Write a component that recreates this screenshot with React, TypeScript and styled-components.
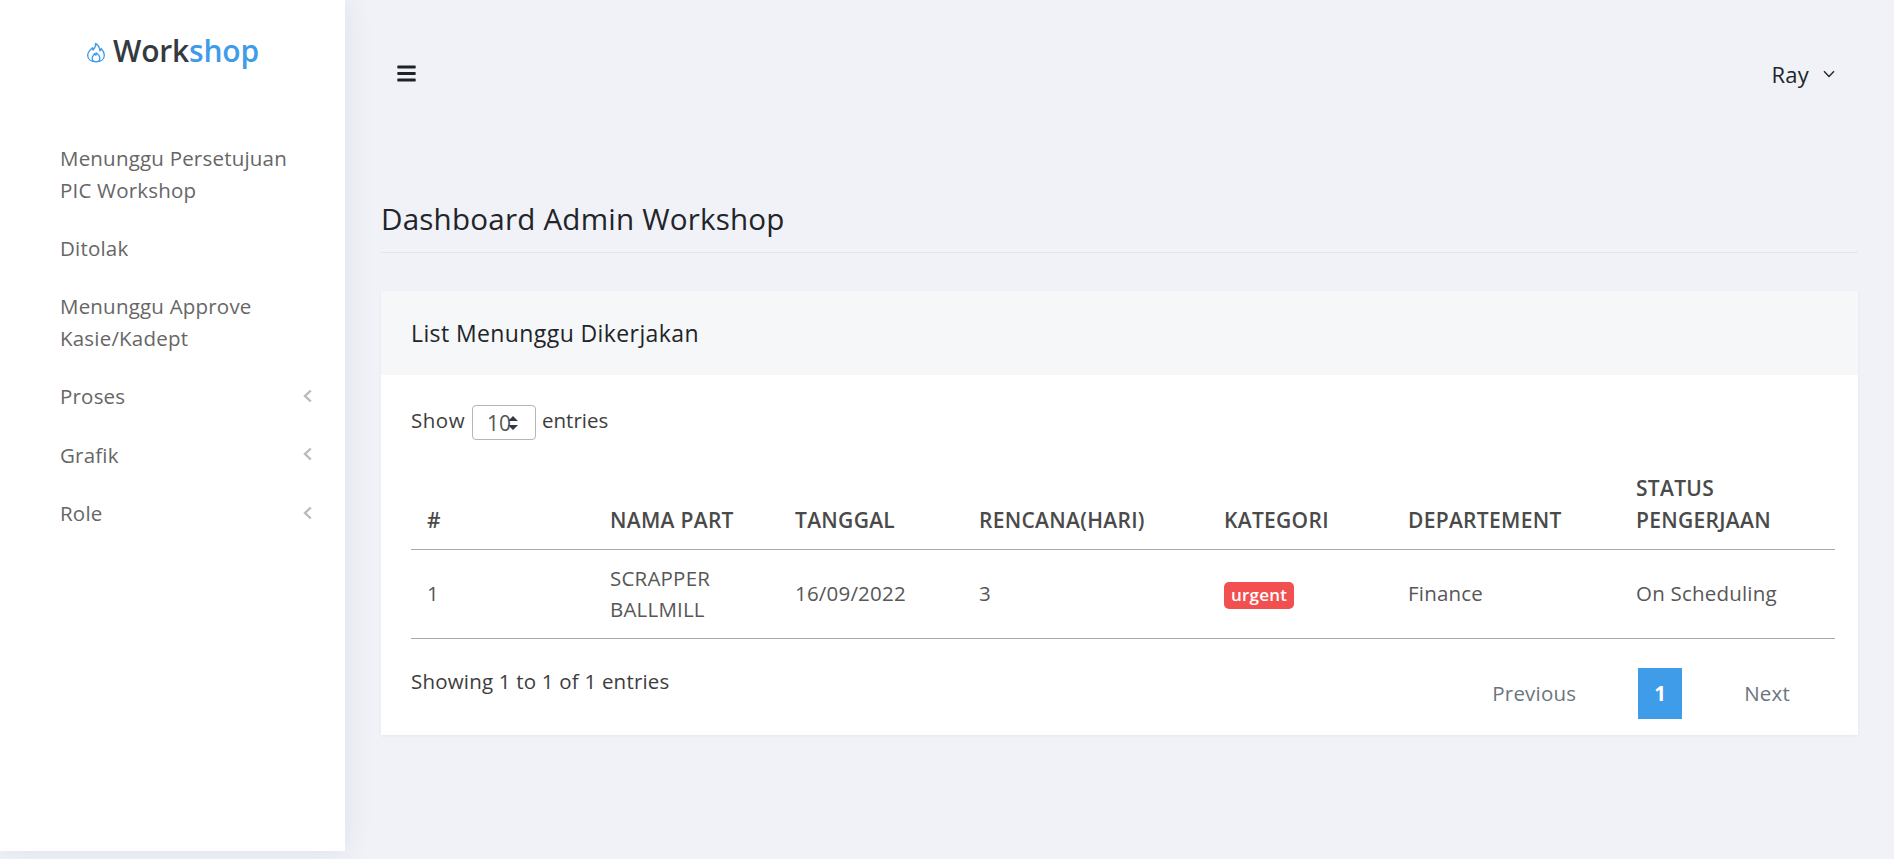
import React from "react";
import styled, { createGlobalStyle } from "styled-components";
import { FaBars } from "react-icons/fa";

const Global = createGlobalStyle`
  html, body { margin: 0; padding: 0; background: #f0f2f7; overflow: hidden; }
  body { font-family: "Open Sans", "Liberation Sans", sans-serif; font-size: 20.5px; letter-spacing: 0.2px; color: #575757; }
  * { box-sizing: border-box; }
`;
const Shell = styled.div`display: flex; align-items: flex-start; width: 1894px; height: 859px;`;
const Sidebar = styled.aside`width: 345px; height: 851px; flex: none; background: #fff; box-shadow: 0 0 28px rgba(40, 60, 120, 0.09);`;
const Logo = styled.div`height: 104px; display: flex; align-items: flex-start; justify-content: center; padding: 29px 0 0 0; gap: 7px;`;
const LogoMark = styled.svg`margin-top: 12px; flex: none;`;
const LogoText = styled.span`font-size: 30px; line-height: 44px; font-weight: 600; color: #343a40; letter-spacing: -0.2px;`;
const LogoAccent = styled.span`color: #3e9ce8;`;
const Menu = styled.nav`display: flex; flex-direction: column; padding-top: 26px;`;
const MenuItem = styled.a`display: flex; align-items: center; justify-content: space-between; padding: 13.4px 33px 13.4px 60px; line-height: 31.5px; color: #666; width: 100%;`;
const MenuLabel = styled.span`max-width: 240px;`;
const MenuArrow = styled.svg`flex: none; margin-top: -2px;`;
const Main = styled.main`flex: 1; padding: 0 36px; min-width: 0;`;
const Topbar = styled.header`height: 147px; display: flex; align-items: flex-start; justify-content: space-between; padding: 63px 23px 0 15px; color: #212529;`;
const Burger = styled.span`display: flex; font-size: 21px; color: #1f2226;`;
const User = styled.span`display: flex; align-items: center; gap: 14px; font-size: 22px; line-height: 20px; margin-top: 1px; color: #212529;`;
const PageTitle = styled.h1`margin: 0; height: 106px; padding-top: 47px; border-bottom: 1px solid #e4e6eb; font-size: 29.6px; line-height: 50px; font-weight: 400; color: #212529;`;
const Card = styled.section`margin-top: 38px; background: #fff; box-shadow: 0 1px 3px rgba(40, 60, 120, 0.06);`;
const CardHead = styled.div`height: 84px; display: flex; align-items: center; padding: 0 30px; background: #f6f7f9; color: #212529; font-size: 23px; letter-spacing: 0.4px;`;
const CardBody = styled.div`padding: 29px 23px 16px 30px;`;
const Length = styled.div`display: flex; align-items: center; gap: 6px; height: 36px; color: #3d3d3d;`;
const LengthText = styled.span<{ $spacing: number }>`margin-top: -5px; letter-spacing: ${(p) => p.$spacing}px;`;
const Select = styled.span`position: relative; display: block; width: 64px; height: 35px; margin-left: 1px; border: 1px solid #b5b5b5; border-radius: 4px; padding-left: 14px; line-height: 35px; font-size: 21px; letter-spacing: 0; color: #555;`;
const Spin = styled.svg`position: absolute; right: 16px; top: 9px;`;
const Table = styled.table`width: 100%; margin-top: 22px; border-collapse: collapse; table-layout: fixed; border-bottom: 1px solid #aaa;`;
const Th = styled.th<{ $w: number }>`width: ${(p) => p.$w}px; padding: 0 16px 13px; border-bottom: 1px solid #aaa; text-align: left; vertical-align: bottom; font-weight: 600; line-height: 32px; color: #4a4a4a; height: 87px; font-size: 21px; letter-spacing: 0.3px;`;
const Td = styled.td`padding: 13px 16px; line-height: 31px; color: #575757;`;
const Badge = styled.span`display: inline-block; padding: 0 7px; height: 27px; line-height: 26px; border-radius: 5px; background: #f25050; color: #fff; font-size: 17px; font-weight: 600; vertical-align: middle;`;
const Footer = styled.div`display: flex; justify-content: space-between; align-items: flex-start;`;
const Info = styled.div`padding-top: 27px; line-height: 31px; color: #3d3d3d;`;
const Pager = styled.div`display: flex; margin: 29px 15px 0 0; align-items: center; gap: 32px;`;
const PageLink = styled.span<{ $active?: boolean }>`display: flex; align-items: center; justify-content: center; height: 51px; padding: 0 ${(p) => (p.$active ? 15 : 30)}px; width: ${(p) => (p.$active ? "44px" : "auto")}; background: ${(p) => (p.$active ? "#3e9ce8" : "transparent")}; color: ${(p) => (p.$active ? "#fff" : "#6c757d")}; font-weight: ${(p) => (p.$active ? 700 : 400)};`;

const menu = [
  { label: "Menunggu Persetujuan PIC Workshop" },
  { label: "Ditolak" },
  { label: "Menunggu Approve Kasie/Kadept" },
  { label: "Proses", arrow: true },
  { label: "Grafik", arrow: true },
  { label: "Role", arrow: true },
];
const cols: [string, number][] = [["#", 183], ["NAMA PART", 185], ["TANGGAL", 184], ["RENCANA(HARI)", 245], ["KATEGORI", 184], ["DEPARTEMENT", 228], ["STATUS PENGERJAAN", 215]];

export default function App() {
  return (
    <Shell>
      <Global />
      <Sidebar>
        <Logo>
          <LogoMark width="20" height="23" viewBox="0 0 24 24" fill="none" stroke="#3e9ce8" strokeWidth="1.6" strokeLinejoin="round">
            <path d="M11.5 1c.8 3.6-1.2 5.8-3 8-.5-.9-.7-1.8-.7-2.8C5 8.6 2 12 2 15.2 2 20 6 23 12 23s10-3 10-7.8c0-3.4-2.1-6-3.8-8-.2 1.2-.7 2.2-1.6 2.8C16.6 6.6 14.8 3.2 11.5 1z" />
            <path d="M12 23c-2.9 0-4.6-1.8-4.6-4.2 0-2.2 1.9-3.6 2.8-5.4.5 1 .9 1.5 1.7 1.8.3-1 .3-1.8.2-2.8 1.8 1.4 4.5 3.9 4.5 6.4 0 2.4-1.7 4.2-4.6 4.2z" />
          </LogoMark>
          <LogoText>Work<LogoAccent>shop</LogoAccent></LogoText>
        </Logo>
        <Menu>
          {menu.map((m) => (
            <MenuItem key={m.label}>
              <MenuLabel>{m.label}</MenuLabel>
              {m.arrow && (
                <MenuArrow width="9" height="14" viewBox="0 0 9 14" fill="none" stroke="#bbb" strokeWidth="2.4">
                  <path d="M7.8 1.5 2 7l5.8 5.5" />
                </MenuArrow>
              )}
            </MenuItem>
          ))}
        </Menu>
      </Sidebar>
      <Main>
        <Topbar>
          <Burger><FaBars /></Burger>
          <User>
            Ray
            <svg width="12" height="8" viewBox="0 0 12 8" fill="none" stroke="#212529" strokeWidth="1.4"><path d="M1 1.2 6 6.4l5-5.2" /></svg>
          </User>
        </Topbar>
        <PageTitle>Dashboard Admin Workshop</PageTitle>
        <Card>
          <CardHead>List Menunggu Dikerjakan</CardHead>
          <CardBody>
            <Length>
              <LengthText $spacing={0.5}>Show</LengthText>
              <Select>10<Spin width="12" height="16" viewBox="0 0 12 16"><path d="M6 1l5 5H1zM6 15l5-5H1z" fill="#343a40" /></Spin></Select>
              <LengthText $spacing={0}>entries</LengthText>
            </Length>
            <Table>
              <thead>
                <tr>{cols.map(([c, w]) => <Th key={c} $w={w}>{c}</Th>)}</tr>
              </thead>
              <tbody>
                <tr>
                  <Td>1</Td>
                  <Td>SCRAPPER BALLMILL</Td>
                  <Td>16/09/2022</Td>
                  <Td>3</Td>
                  <Td><Badge>urgent</Badge></Td>
                  <Td>Finance</Td>
                  <Td>On Scheduling</Td>
                </tr>
              </tbody>
            </Table>
            <Footer>
              <Info>Showing 1 to 1 of 1 entries</Info>
              <Pager>
                <PageLink>Previous</PageLink>
                <PageLink $active>1</PageLink>
                <PageLink>Next</PageLink>
              </Pager>
            </Footer>
          </CardBody>
        </Card>
      </Main>
    </Shell>
  );
}
